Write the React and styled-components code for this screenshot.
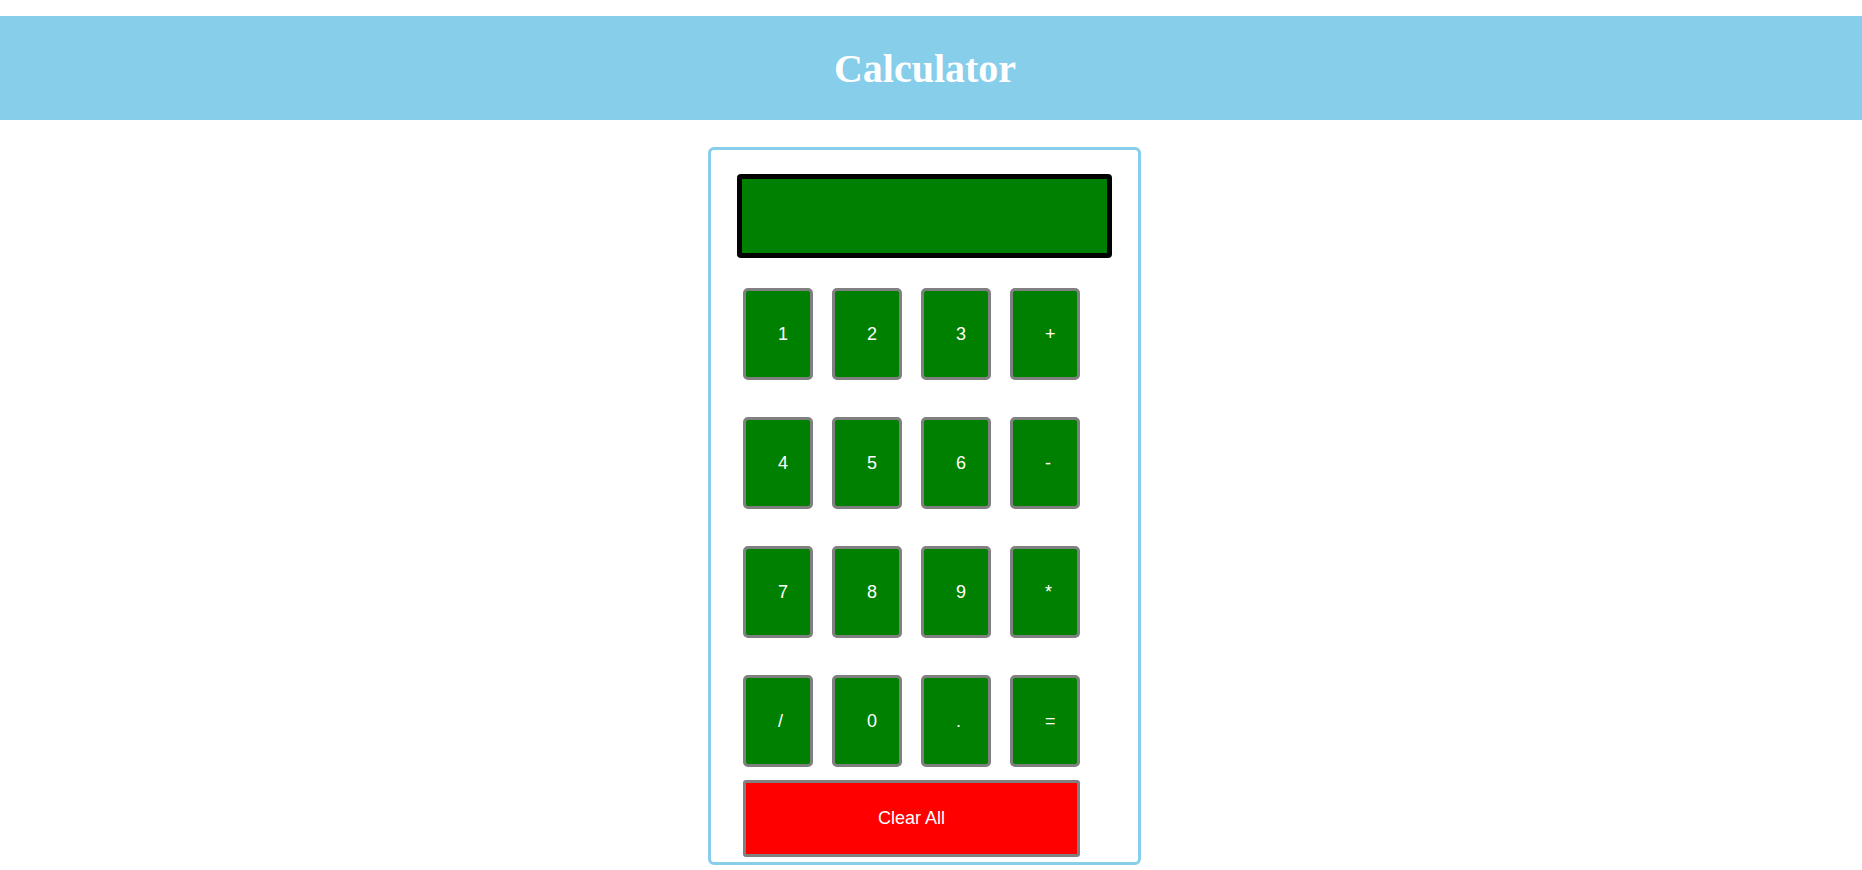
import styled, { createGlobalStyle } from "styled-components";

const GlobalStyle = createGlobalStyle`
  body {
    margin: 0;
    background: #ffffff;
    font-family: "Liberation Sans", Arial, sans-serif;
  }
`;

const Header = styled.header`
  margin-top: 16px;
  height: 104px;
  padding-right: 12px;
  background: #87ceeb;
  display: flex;
  align-items: center;
  justify-content: center;
`;

const Title = styled.h1`
  margin: 0;
  color: #ffffff;
  font-family: "Liberation Serif", "Times New Roman", serif;
  font-weight: bold;
  font-size: 40px;
`;

const Panel = styled.div`
  box-sizing: border-box;
  width: 433px;
  margin: 27px 0 0 calc(50% - 223px);
  padding: 24px 0 5px 26px;
  border: 3px solid #87ceeb;
  border-radius: 6px;
`;

const Screen = styled.div`
  box-sizing: border-box;
  width: 375px;
  height: 84px;
  background: #008000;
  border: 5px solid #000000;
  border-radius: 4px;
`;

const Keypad = styled.div`
  display: grid;
  grid-template-columns: repeat(4, 70px);
  column-gap: 19px;
  row-gap: 37px;
  margin: 30px 0 0 6px;
`;

const Key = styled.button`
  box-sizing: border-box;
  width: 70px;
  height: 92px;
  padding: 0 0 0 32px;
  text-align: left;
  background: #008000;
  color: #ffffff;
  border: 3px solid #808080;
  border-radius: 5px;
  font-family: "Liberation Sans", Arial, sans-serif;
  font-size: 18px;
`;

const ClearButton = styled.button`
  box-sizing: border-box;
  display: block;
  width: 337px;
  height: 77px;
  margin: 13px 0 0 6px;
  background: #ff0000;
  color: #ffffff;
  border: 3px solid #808080;
  border-radius: 3px;
  font-family: "Liberation Sans", Arial, sans-serif;
  font-size: 18px;
`;

const keys = ["1", "2", "3", "+", "4", "5", "6", "-", "7", "8", "9", "*", "/", "0", ".", "="];

const App = () => {
  return (
    <>
      <GlobalStyle />
      <Header>
        <Title>Calculator</Title>
      </Header>
      <Panel>
        <Screen />
        <Keypad>
          {keys.map((k) => (
            <Key key={k}>{k}</Key>
          ))}
        </Keypad>
        <ClearButton>Clear All</ClearButton>
      </Panel>
    </>
  );
};

export default App;
